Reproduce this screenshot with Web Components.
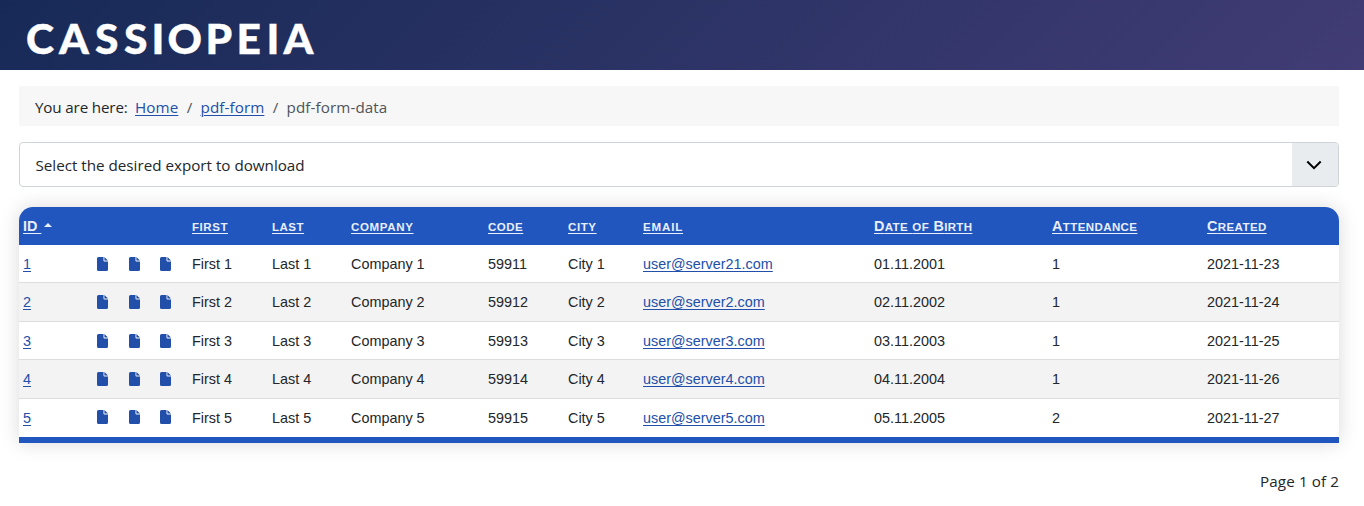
<!DOCTYPE html>
<html lang="en">
<head>
<meta charset="utf-8">
<title>pdf-form-data</title>
<style>
  body {
    margin: 0;
    background: #fff;
    color: #22262a;
    font: 15.2px/24px "Open Sans", "Noto Sans", sans-serif;
    overflow: hidden;
  }
  main {
    display: flex;
    flex-direction: column;
    padding: 16px 25px 0 19px;
  }
</style>
</head>
<body>
<site-header></site-header>
<main>
  <bread-crumbs>
    <crumb-item href="#">Home</crumb-item>
    <crumb-item href="#">pdf-form</crumb-item>
    <crumb-item>pdf-form-data</crumb-item>
  </bread-crumbs>
  <export-select>Select the desired export to download</export-select>
  <data-table></data-table>
  <page-counter>Page 1 of 2</page-counter>
</main>

<script>
class SiteHeader extends HTMLElement {
  constructor() {
    super();
    this.attachShadow({ mode: 'open' });
    this.shadowRoot.innerHTML = `<style>
                                  :host {
                                    display: block;
                                    height: 70px;
                                    background: linear-gradient(135deg, #172a57 0%, #413c74 100%);
                                  }
                                  svg { display: block; }
                                  text {
                                    font: 900 42.5px Lato, sans-serif;
                                    letter-spacing: 0;
                                    fill: #fff;
                                    stroke: #fff;
                                    stroke-width: .4px;
                                  }
                                </style>
                                <svg width="340" height="70" role="img" aria-label="CASSIOPEIA">
                                  <text y="54" x="26 59 95 124 151.5 167.5 205.5 236.500 266.5 283.5">CASSIOPEIA</text>
                                </svg>`
  }
}
customElements.define("site-header", SiteHeader);

class BreadCrumbs extends HTMLElement {
  constructor() {
    super();
    this.attachShadow({ mode: 'open' });
    this.shadowRoot.innerHTML = `<style>
                                  :host {
                                    display: flex;
                                    height: 40px;
                                    box-sizing: border-box;
                                    padding: 9px 16px 7px;
                                    background: #f7f7f7;
                                  }
                                  .label { width: 100px; white-space: nowrap; letter-spacing: -0.15px; }
                                </style>
                                <span class="label">You are here:</span>
                                <slot></slot>`
  }
}
customElements.define("bread-crumbs", BreadCrumbs);

class CrumbItem extends HTMLElement {
  connectedCallback() {
    this.attachShadow({ mode: 'open' });
    const href = this.getAttribute('href');
    const tag = href ? `<a href="${href}"><slot></slot></a>` : `<span><slot></slot></span>`;
    this.shadowRoot.innerHTML = `<style>
                                  :host { display: flex; color: #4f5459; }
                                  :host(:not(:first-child))::before { content: "/"; padding: 0 8.2px 0 8.4px; }
                                  a { color: #224faa; text-underline-offset: 2px; text-decoration-thickness: 1px; }
                                  a, span { letter-spacing: 0.1px; }
                                </style>${tag}`
  }
}
customElements.define("crumb-item", CrumbItem);

class ExportSelect extends HTMLElement {
  constructor() {
    super();
    this.attachShadow({ mode: 'open' });
    this.shadowRoot.innerHTML = `<style>
                                  :host {
                                    display: flex;
                                    justify-content: space-between;
                                    align-items: center;
                                    height: 45px;
                                    box-sizing: border-box;
                                    margin-top: 16px;
                                    padding-left: 15.5px;
                                    border: 1px solid #ced4da;
                                    border-radius: 4px;
                                    overflow: hidden;
                                  }
                                  .arrow {
                                    display: flex;
                                    align-items: center;
                                    justify-content: center;
                                    width: 46px;
                                    height: 100%;
                                    padding-right: 2px;
                                    box-sizing: border-box;
                                    background: #e9ecef;
                                  }
                                </style>
                                <span><slot></slot></span>
                                <span class="arrow">
                                  <svg width="18" height="12" viewBox="0 0 18 12">
                                    <path d="M2.300 2.500 9 9.200 15.700 2.500" fill="none" stroke="#000" stroke-width="2"/>
                                  </svg>
                                </span>`
  }
}
customElements.define("export-select", ExportSelect);

class FileIcon extends HTMLElement {
  constructor() {
    super();
    this.attachShadow({ mode: 'open' });
    this.shadowRoot.innerHTML = `<style>
                                  :host { display: block; height: 14px; margin-bottom: 2px; }
                                  svg { display: block; fill: #224faa; }
                                </style>
                                <svg width="11" height="14" viewBox="0 0 11 14">
                                  <path d="M1.500 0H6.500V3.500Q6.500 4.500 7.500 4.500H11V12.500Q11 14 9.500 14H1.500Q0 14 0 12.500V1.500Q0 0 1.500 0ZM7.400 0 11 3.600H7.400Z"/>
                                </svg>`
  }
}
customElements.define("file-icon", FileIcon);

const columns = [
  { text: "first", track: 0.55 },
  { text: "last", track: 0.5 },
  { text: "company", track: 0.65 },
  { text: "code", track: 0.5 },
  { text: "city", track: 0.6 },
  { text: "email", track: 0.85 },
  { text: "Date of Birth", track: 0.35 },
  { text: "Attendance", track: 0.4 },
  { text: "Created", track: 0.4 }
];

const rows = [
  [1, "59911", "user@server21.com", "01.11.2001", 1, "2021-11-23"],
  [2, "59912", "user@server2.com", "02.11.2002", 1, "2021-11-24"],
  [3, "59913", "user@server3.com", "03.11.2003", 1, "2021-11-25"],
  [4, "59914", "user@server4.com", "04.11.2004", 1, "2021-11-26"],
  [5, "59915", "user@server5.com", "05.11.2005", 2, "2021-11-27"]
];

class DataTable extends HTMLElement {
  constructor() {
    super();
    this.attachShadow({ mode: 'open' });
    this.shadowRoot.innerHTML = `<style>
                                  :host {
                                    display: block;
                                    margin-top: 20px;
                                    border-bottom: 6px solid #2156be;
                                    border-radius: 14px 14px 0 0;
                                    box-shadow: 0 0 20px rgba(0, 0, 0, .15);
                                    font: 14.4px/21.6px "Liberation Sans", Arial, sans-serif;
                                    letter-spacing: 0;
                                    overflow: hidden;
                                  }
                                  .row {
                                    display: grid;
                                    grid-template-columns: 74px 31.5px 31.5px 32px 80px 79px 137px 80px 75px 231px 178px 155px 136px;
                                    align-items: center;
                                    height: 38.4px;
                                    box-sizing: border-box;
                                    padding-top: 2.1px;
                                    border-bottom: 1px solid #dcdddf;
                                    background: #fff;
                                  }
                                  .row > * { padding-left: 4px; white-space: nowrap; }
                                  .row.striped { background: #f3f3f3; }
                                  .row:last-child { border-bottom-color: transparent; }
                                  .row.head {
                                    height: 38px;
                                    border: 0;
                                    background: #2156be;
                                    font-weight: bold;
                                  }
                                  a { color: #224faa; text-underline-offset: 2px; text-decoration-thickness: 1px; }
                                  .head a { color: #e9eefb; }
                                  small { font-size: 11.52px; text-transform: uppercase; }
                                  .caret {
                                    display: inline-block;
                                    margin: 0 0 4px 3px;
                                    border: 4px solid transparent;
                                    border-top: 0;
                                    border-bottom-color: #e9eefb;
                                  }
                                </style>
                                <div class="row head">${this._head()}</div>
                                ${rows.map(row => this._row(row)).join("")}`
  }

  _head() {
    const cells = columns.map(({ text, track }) => {
      const caps = text.replace(/[a-z]+/g, "<small>$&</small>");
      return `<div><a href="#" style="letter-spacing: ${track}px">${caps}</a></div>`
    });
    return `<div><a href="#">ID&nbsp;</a><i class="caret"></i></div><i></i><i></i><i></i>` + cells.join("")
  }

  _row([id, code, email, birth, attendance, created]) {
    return `<div class="row ${id % 2 ? "" : "striped"}">
              <div><a href="#">${id}</a></div>
              <file-icon></file-icon><file-icon></file-icon><file-icon></file-icon>
              <div>First ${id}</div>
              <div>Last ${id}</div>
              <div>Company ${id}</div>
              <div>${code}</div>
              <div>City ${id}</div>
              <div><a href="#">${email}</a></div>
              <div>${birth}</div>
              <div>${attendance}</div>
              <div>${created}</div>
            </div>`
  }
}
customElements.define("data-table", DataTable);

class PageCounter extends HTMLElement {
  constructor() {
    super();
    this.attachShadow({ mode: 'open' });
    this.shadowRoot.innerHTML = `<style>
                                  :host { display: block; margin-top: 26px; text-align: right; letter-spacing: 0.1px; }
                                </style>
                                <slot></slot>`
  }
}
customElements.define("page-counter", PageCounter);
</script>
</body>
</html>
